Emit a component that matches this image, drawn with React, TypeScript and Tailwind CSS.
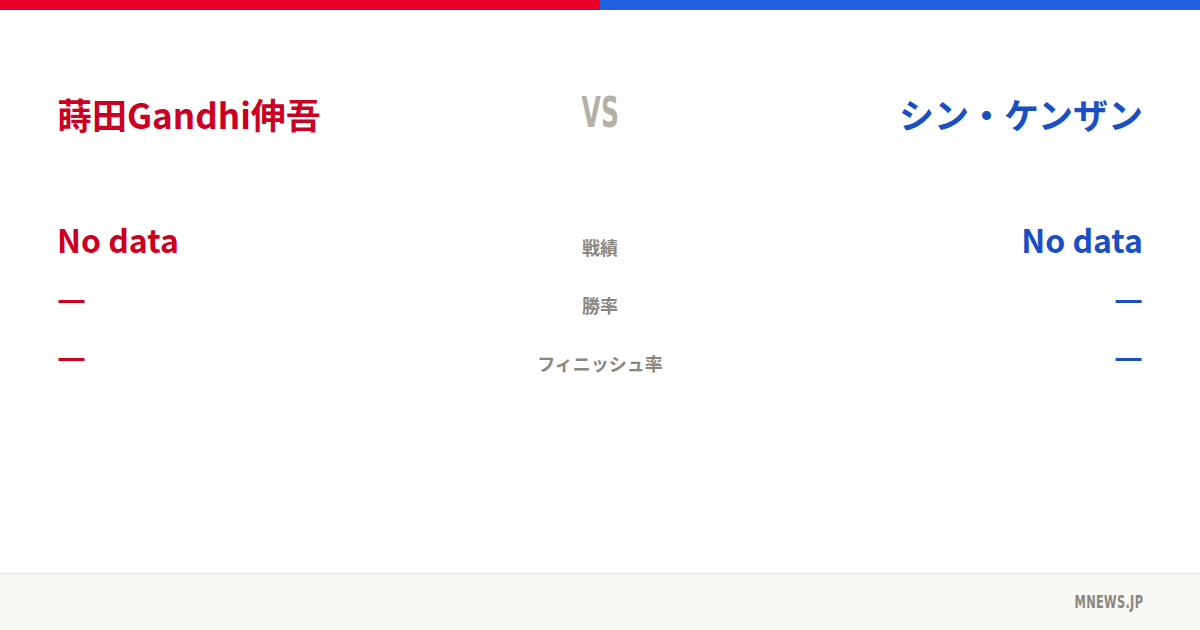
export default function App() {
  const jp = { fontFamily: '"Noto Sans CJK JP", "Noto Sans", sans-serif' };
  const rows = [
    { label: "戦績", left: "No data", right: "No data" },
    { label: "勝率", left: "—", right: "—" },
    { label: "フィニッシュ率", left: "—", right: "—" },
  ];
  return (
    <div className="w-[1200px] h-[630px] bg-white flex flex-col overflow-hidden" style={jp}>
      <div className="flex h-[10px] shrink-0">
        <div className="flex-1 bg-[#e8002a]" />
        <div className="flex-1 bg-[#1f5fe0]" />
      </div>
      <div className="flex-1 flex flex-col px-[57px]">
        <div className="grid grid-cols-[1fr_auto_1fr] items-center mt-[78px] h-[50px]">
          <div className="text-[35px] font-bold text-[#cc0022] leading-none">蒔田Gandhi伸吾</div>
          <div className="flex justify-center w-[120px]">
            <span
              className="inline-block text-[42px] font-bold text-[#b5b0a6] leading-none scale-x-[0.66]"
              style={{ fontFamily: '"DejaVu Sans Condensed", "DejaVu Sans", sans-serif' }}
            >
              VS
            </span>
          </div>
          <div className="text-[35px] font-bold text-[#1a4fc4] leading-none text-right">シン・ケンザン</div>
        </div>
        <div className="flex flex-col mt-[72px]">
          {rows.map((r) => (
            <div key={r.label} className="grid grid-cols-[1fr_auto_1fr] items-center h-[58px]">
              <div className="font-bold text-[32px] text-[#cc0022] leading-none">{r.left}</div>
              <div className="w-[200px] text-center text-[18px] font-bold text-[#8a877f] leading-none pt-[15px]">{r.label}</div>
              <div className="font-bold text-[32px] text-[#1a4fc4] leading-none text-right">{r.right}</div>
            </div>
          ))}
        </div>
      </div>
      <div className="h-[57px] shrink-0 border-t border-[#e8e6e0] bg-[#f9f8f4] flex items-center justify-end pr-[57px]">
        <span
          className="inline-block text-[18px] font-bold text-[#8a877f] leading-none tracking-[0.5px] scale-x-[0.7] origin-right"
          style={{ fontFamily: '"DejaVu Sans Condensed", "DejaVu Sans", sans-serif' }}
        >
          MNEWS.JP
        </span>
      </div>
    </div>
  );
}
